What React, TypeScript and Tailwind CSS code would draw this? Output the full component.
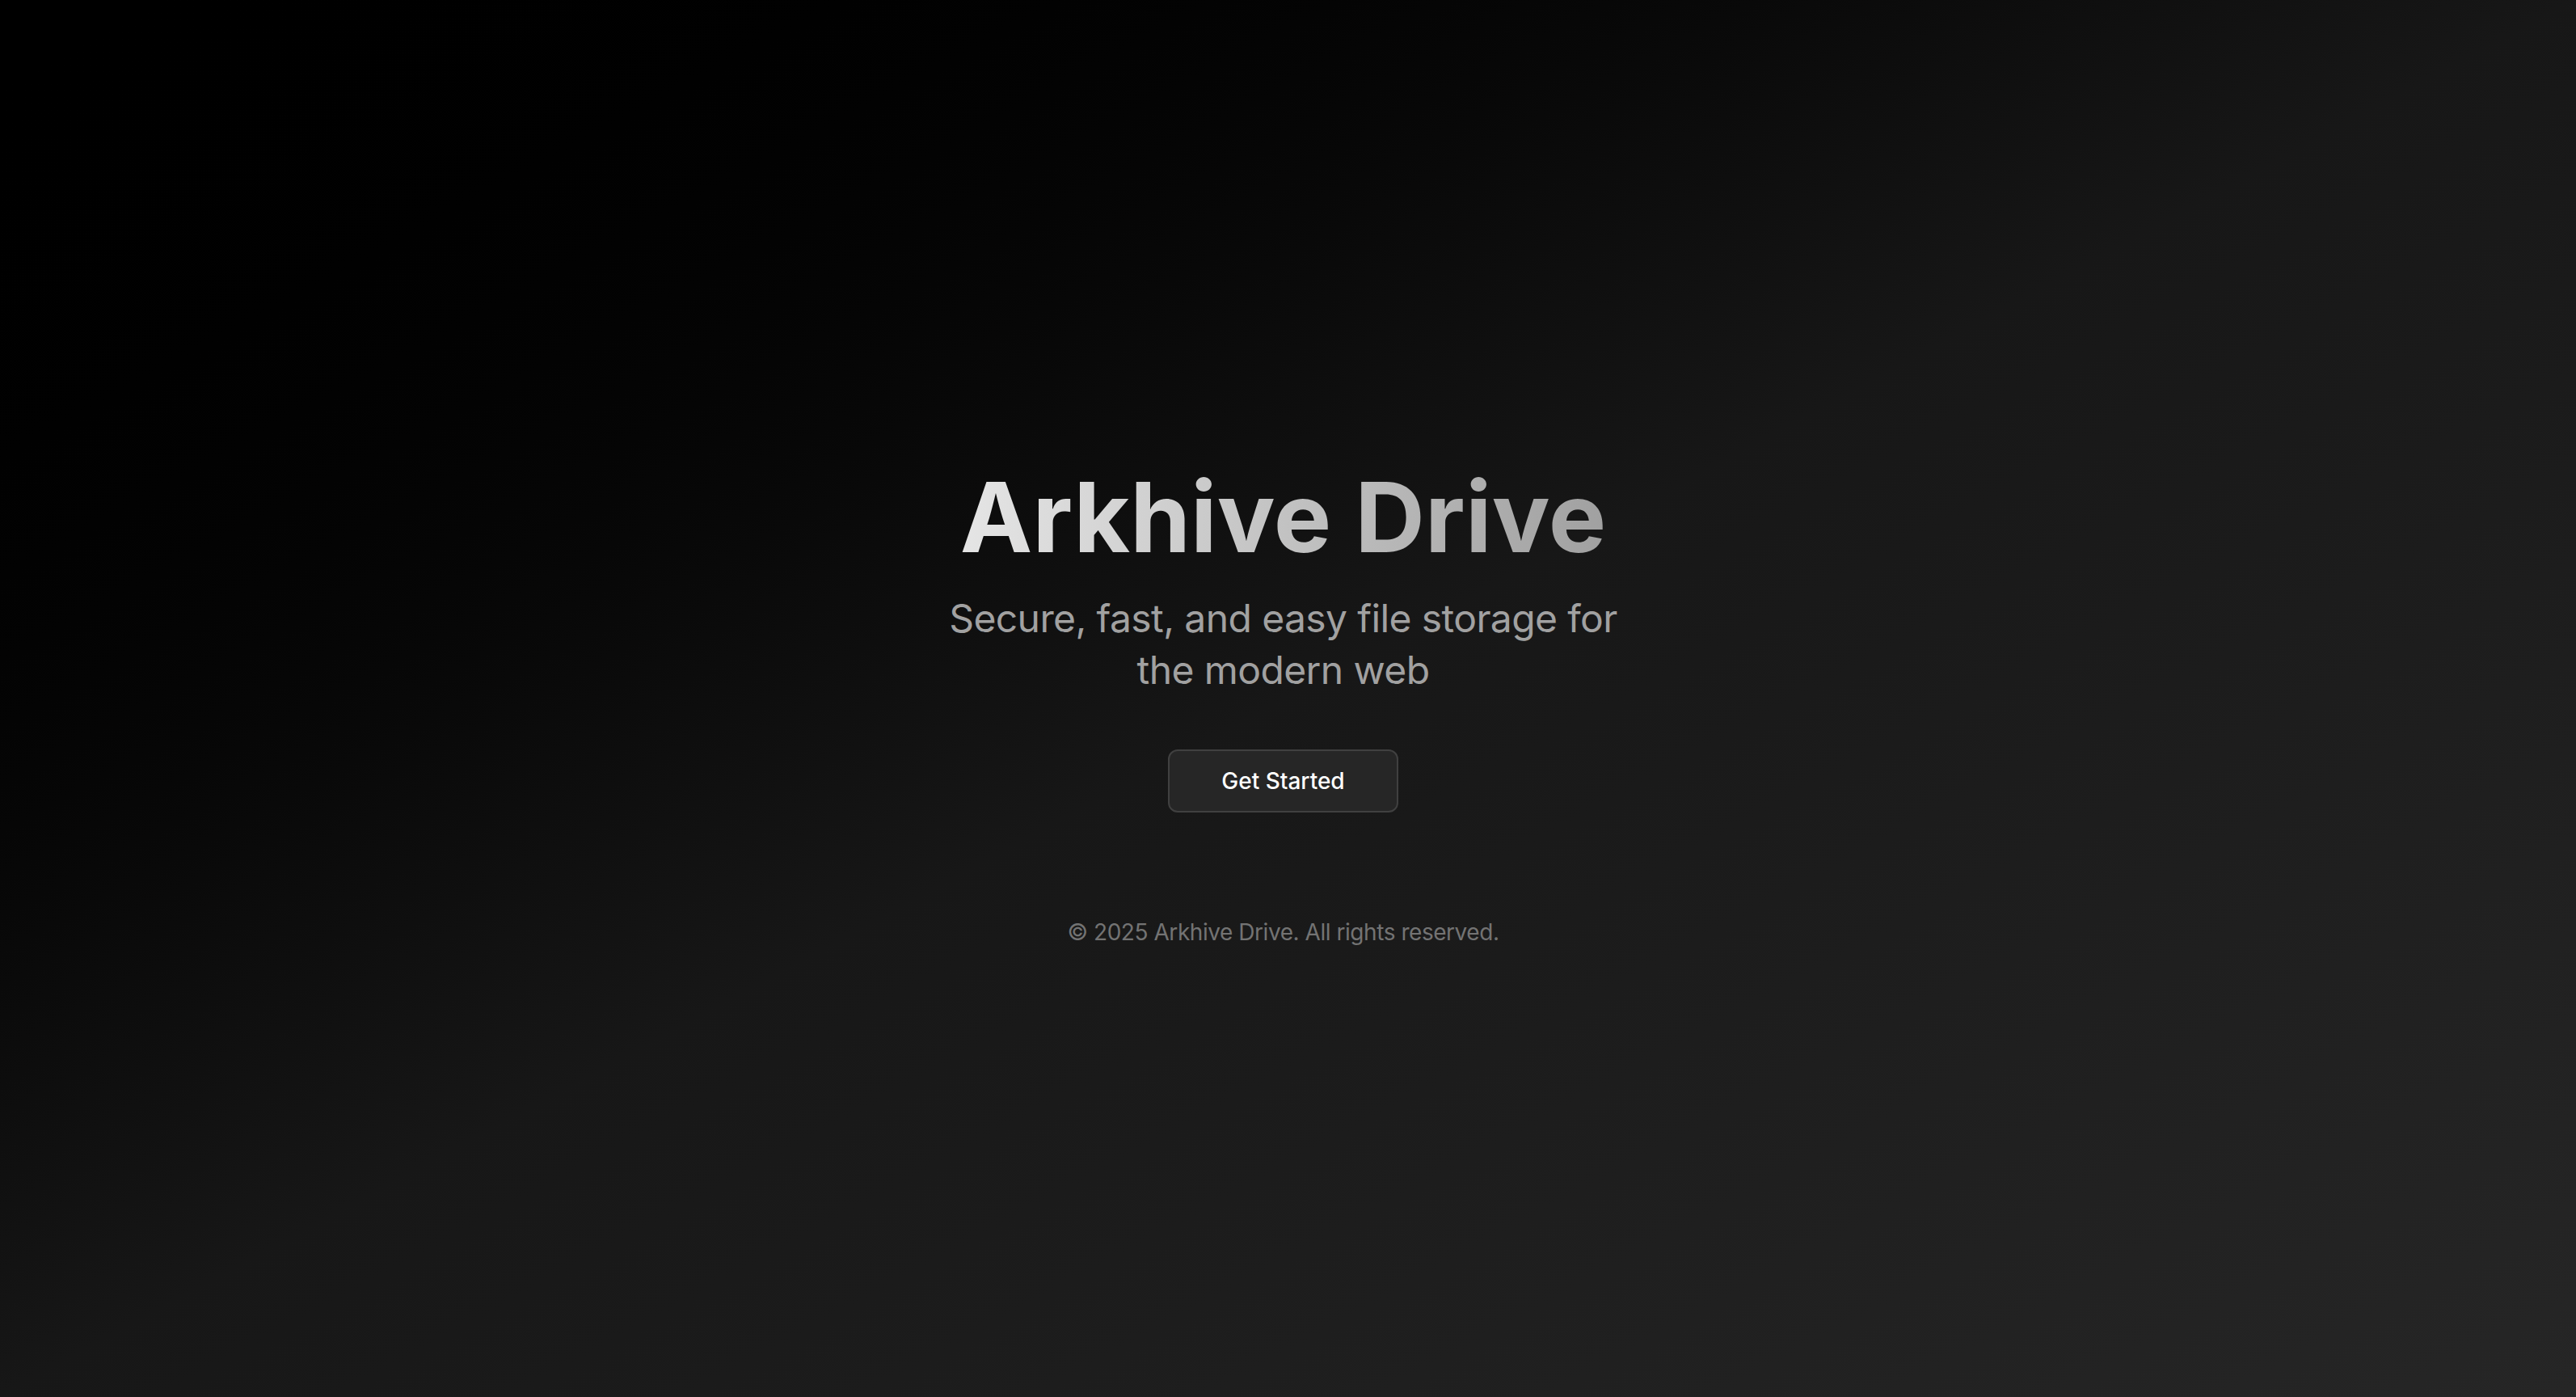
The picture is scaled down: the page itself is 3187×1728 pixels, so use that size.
export default function App() {
  return (
    <main
      className="min-h-screen w-full flex flex-col items-center justify-center bg-gradient-to-br from-black via-neutral-900 to-neutral-800 pt-[24px] pr-[12px] text-center"
      style={{ fontFamily: "Inter, 'Noto Sans', sans-serif" }}
    >
      {/* Hero */}
      <h1 className="text-[120px] leading-[120px] font-bold tracking-[0.2px] bg-gradient-to-r from-neutral-200 to-neutral-400 bg-clip-text text-transparent">
        Arkhive Drive
      </h1>
      <p className="mt-[33px] max-w-[900px] text-[48px] leading-[64px] tracking-[-0.6px] text-neutral-400">
        Secure, fast, and easy file storage for the modern web
      </p>

      <button className="mt-[66px] h-[78px] px-[64px] rounded-[12px] border-2 border-neutral-700 bg-neutral-800 text-[28px] font-medium text-white">
        Get Started
      </button>

      {/* Footer */}
      <footer className="mt-[128px] text-[28px] leading-[40px] tracking-[-0.45px] text-neutral-500">
        © 2025 Arkhive Drive. All rights reserved.
      </footer>
    </main>
  )
}
